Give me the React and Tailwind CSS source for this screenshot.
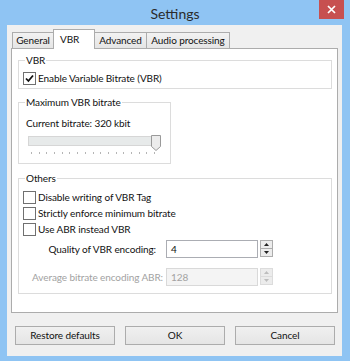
import React from 'react'

const font = { fontFamily: 'Lato, "Liberation Sans", sans-serif' }

function CheckBox({ checked, label }) {
    return (
        <div className="flex items-center h-[16px]">
            <div className="w-[13px] h-[13px] border border-[#707070] bg-white flex items-center justify-center">
                {checked && (
                    <svg width="9" height="9" viewBox="0 0 9 9">
                        <path d="M1 4.5 L3.4 7 L8 1.5" fill="none" stroke="#111" strokeWidth="1.8" />
                    </svg>
                )}
            </div>
            <span className="ml-[2px] text-[10px] tracking-[-0.1px] text-[#111] leading-none whitespace-nowrap">{label}</span>
        </div>
    )
}

function GroupBox({ title, className, children }) {
    return (
        <div className={`relative border border-[#dcdcdc] ${className}`}>
            <span className="absolute left-[6px] -top-[7px] bg-white px-[1px] text-[10px] tracking-[-0.1px] leading-[12px] text-[#111]">{title}</span>
            {children}
        </div>
    )
}

function Arrow({ up, color }) {
    return (
        <svg width="5" height="3" viewBox="0 0 5 3">
            <path d={up ? 'M0 3 L2.5 0 L5 3 Z' : 'M0 0 L2.5 3 L5 0 Z'} fill={color} />
        </svg>
    )
}

function Spinner({ disabled }) {
    const border = disabled ? 'border-[#dcdcdc]' : 'border-[#acacac]'
    const color = disabled ? '#bdbdbd' : '#222'
    return (
        <div className="ml-[2px] w-[13px] h-[18px] flex flex-col">
            <div className={`h-[9px] border ${border} bg-[#ececec] flex items-center justify-center`}>
                <Arrow up color={color} />
            </div>
            <div className={`h-[9px] -mt-px border ${border} bg-[#ececec] flex items-center justify-center`}>
                <Arrow color={color} />
            </div>
        </div>
    )
}

function Tab({ label, width, selected, first }) {
    if (selected) {
        return (
            <div className={`relative z-10 h-[20px] -mb-px -ml-px bg-white border-t border-l border-r border-[#acacac] pl-[6px] pt-[2px] text-[10px] tracking-[-0.1px] text-[#111] ${width}`}>
                {label}
            </div>
        )
    }
    return (
        <div className={`h-[16px] border-t border-l border-r border-[#acacac] bg-gradient-to-b from-[#f2f2f2] to-[#e5e5e5] flex items-center justify-center text-[10px] tracking-[-0.1px] text-[#111] whitespace-nowrap ${first ? '' : '-ml-px'} ${width}`}>
            {label}
        </div>
    )
}

function Button({ label }) {
    return (
        <button className="w-[100px] h-[19px] border border-[#acacac] bg-gradient-to-b from-[#f0f0f0] to-[#e5e5e5] text-[10px] tracking-[-0.1px] text-[#111] flex items-center justify-center">
            {label}
        </button>
    )
}

export default function App() {
    const ticks = Array.from({ length: 17 })

    return (
        <div className="w-[350px] h-[361px] bg-[#8fc4f3] flex flex-col overflow-hidden" style={font}>
            {/* Title bar */}
            <div className="relative h-[25px] flex items-center justify-center">
                <span className="text-[14px] text-[#2b2b2b] pt-[1px]">Settings</span>
                <div className="absolute right-[6px] top-0 w-[25px] h-[19px] bg-[#c75050] flex items-center justify-center">
                    <svg width="9" height="9" viewBox="0 0 9 9">
                        <path d="M1 1 L8 8 M8 1 L1 8" stroke="#fff" strokeWidth="1.7" />
                    </svg>
                </div>
            </div>

            {/* Client area */}
            <div className="ml-[7px] w-[335px] h-[331px] bg-[#f0f0f0] px-[4px] pt-[4px] flex flex-col">
                {/* Tabs */}
                <div className="h-[19px] ml-[1px] flex items-end">
                    <Tab label="General" width="w-[42px]" first />
                    <Tab label="VBR" width="w-[42px]" selected />
                    <Tab label="Advanced" width="w-[53px]" />
                    <Tab label="Audio processing" width="w-[84px]" />
                </div>

                {/* Tab pane */}
                <div className="w-[327px] h-[265px] border border-[#acacac] bg-white pl-[6px] pt-[11px] flex flex-col">
                    <GroupBox title="VBR" className="w-[314px] h-[29px] pl-[4px] pt-[9px]">
                        <CheckBox checked label="Enable Variable Bitrate (VBR)" />
                    </GroupBox>

                    <GroupBox title="Maximum VBR bitrate" className="mt-[13px] w-[153px] h-[62px] pl-[7px] pt-[14px]">
                        <div className="text-[10px] tracking-[-0.1px] leading-[12px] text-[#111]">Current bitrate: 320 kbit</div>
                        <div className="relative ml-[2px] mt-[7px] w-[133px] h-[16px]">
                            <div className="w-[133px] h-[10px] border border-[#d6d6d6] bg-[#e7eaea]" />
                            <svg className="absolute right-0 -top-px" width="10" height="16" viewBox="0 0 10 16">
                                <path d="M0.5 0.5 H9.5 V11.5 L5 15.5 L0.5 11.5 Z" fill="#ececec" stroke="#9a9a9a" />
                            </svg>
                        </div>
                        <div className="ml-[5px] w-[124px] h-[3px] flex justify-between">
                            {ticks.map((_, i) => (
                                <div key={i} className="w-px h-[2px] bg-[#b5b5b5]" />
                            ))}
                        </div>
                    </GroupBox>

                    <GroupBox title="Others" className="mt-[14px] w-[314px] h-[116px] pl-[4px] pt-[10px]">
                        <CheckBox label="Disable writing of VBR Tag" />
                        <CheckBox label="Strictly enforce minimum bitrate" />
                        <CheckBox label="Use ABR instead VBR" />

                        <div className="mt-[3px] flex items-center">
                            <div className="w-[143px] pr-[10px] flex justify-end whitespace-nowrap text-[10px] tracking-[-0.1px] text-[#111]">Quality of VBR encoding:</div>
                            <div className="w-[92px] h-[18px] border border-[#abadb3] bg-white pl-[4px] flex items-center text-[10px] text-[#111]">4</div>
                            <Spinner />
                        </div>

                        <div className="mt-[10px] flex items-center">
                            <div className="w-[143px] pr-[3px] flex justify-end whitespace-nowrap text-[10px] tracking-[-0.1px] text-[#a2a2a2]">Average bitrate encoding ABR:</div>
                            <div className="w-[92px] h-[18px] border border-[#d9d9d9] bg-[#f4f4f4] pl-[4px] flex items-center text-[10px] text-[#a2a2a2]">128</div>
                            <Spinner disabled />
                        </div>
                    </GroupBox>
                </div>

                {/* Buttons */}
                <div className="mt-[13px] ml-[4px] flex gap-[10px]">
                    <Button label="Restore defaults" />
                    <Button label="OK" />
                    <Button label="Cancel" />
                </div>
            </div>
        </div>
    )
}
